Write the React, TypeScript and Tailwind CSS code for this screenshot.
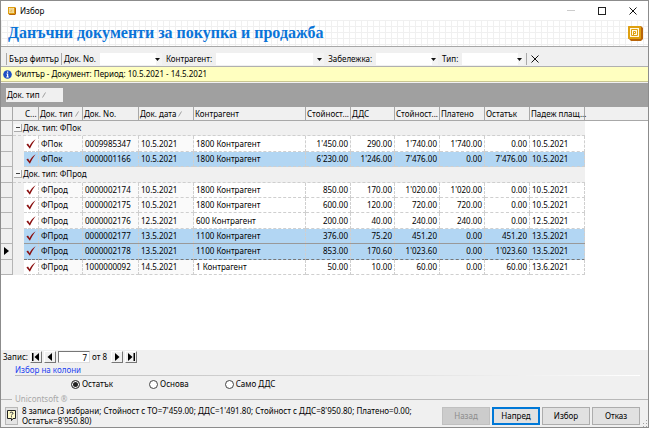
import React from 'react';
import clsx from 'clsx';

type DocRow = {
  type: string;
  no: string;
  date: string;
  partner: string;
  net: string;
  vat: string;
  total: string;
  paid: string;
  rest: string;
  due: string;
  selected?: boolean;
  current?: boolean;
};

type Group = { label: string; rows: DocRow[] };

const groups: Group[] = [
  {
    label: 'Док. тип: ФПок',
    rows: [
      { type: 'ФПок', no: '0009985347', date: '10.5.2021', partner: '1800 Контрагент', net: "1'450.00", vat: '290.00', total: "1'740.00", paid: "1'740.00", rest: '0.00', due: '10.5.2021' },
      { type: 'ФПок', no: '0000001166', date: '10.5.2021', partner: '1800 Контрагент', net: "6'230.00", vat: "1'246.00", total: "7'476.00", paid: '0.00', rest: "7'476.00", due: '10.5.2021', selected: true },
    ],
  },
  {
    label: 'Док. тип: ФПрод',
    rows: [
      { type: 'ФПрод', no: '0000002174', date: '10.5.2021', partner: '1800 Контрагент', net: '850.00', vat: '170.00', total: "1'020.00", paid: "1'020.00", rest: '0.00', due: '10.5.2021' },
      { type: 'ФПрод', no: '0000002175', date: '10.5.2021', partner: '1800 Контрагент', net: '600.00', vat: '120.00', total: '720.00', paid: '720.00', rest: '0.00', due: '10.5.2021' },
      { type: 'ФПрод', no: '0000002176', date: '12.5.2021', partner: '600 Контрагент', net: '200.00', vat: '40.00', total: '240.00', paid: '240.00', rest: '0.00', due: '12.5.2021' },
      { type: 'ФПрод', no: '0000002177', date: '13.5.2021', partner: '1100 Контрагент', net: '376.00', vat: '75.20', total: '451.20', paid: '0.00', rest: '451.20', due: '13.5.2021', selected: true },
      { type: 'ФПрод', no: '0000002178', date: '13.5.2021', partner: '1100 Контрагент', net: '853.00', vat: '170.60', total: "1'023.60", paid: '0.00', rest: "1'023.60", due: '13.5.2021', selected: true, current: true },
      { type: 'ФПрод', no: '1000000092', date: '14.5.2021', partner: '1 Контрагент', net: '50.00', vat: '10.00', total: '60.00', paid: '0.00', rest: '60.00', due: '13.6.2021' },
    ],
  },
];

const columns = [
  { title: 'С...', sorted: false },
  { title: 'Док. тип', sorted: true },
  { title: 'Док. No.', sorted: false },
  { title: 'Док. дата', sorted: true },
  { title: 'Контрагент', sorted: false },
  { title: 'Стойност...', sorted: false },
  { title: 'ДДС', sorted: false },
  { title: 'Стойност...', sorted: false },
  { title: 'Платено', sorted: false },
  { title: 'Остатък', sorted: false },
  { title: 'Падеж плащ...', sorted: false },
];

const Logo = ({ className }: { className: string }) => (
  <svg viewBox="0 0 15 15" className={className} aria-hidden="true">
    <path d="M1 0h12l2 2v11l-2 2H3l-3-3V1z" fill="#b9650a" />
    <rect x="0" y="0" width="13" height="13" rx="1" fill="#dfa010" />
    <path d="M2 2h9v9H2z" fill="#fffbe8" />
    <path d="M3.5 3.5h6v6h-6z" fill="#fffbe8" stroke="#dfa010" />
    <path d="M5.5 9.5v-4h2v2h-2" fill="none" stroke="#dfa010" />
  </svg>
);

const SortMark = () => (
  <svg viewBox="0 0 4 6" className="h-[6px] w-[4px] shrink-0" aria-hidden="true">
    <path d="M0.5 5.5L3.5 0.5" stroke="#8a8a8a" strokeWidth="0.8" />
  </svg>
);

const Check = () => (
  <svg viewBox="0 0 10 10" className="mx-auto h-[10px] w-[10px]" aria-hidden="true">
    <path d="M0.4 5.6L2 4.6L3.6 7C5 4.2 6.6 2 9.6 0.2C7.4 3 5.6 6 3.9 9.8Z" fill="#8b1010" />
  </svg>
);

const FilterSelect = ({ id, label, width }: { id: string; label: string; width: string }) => (
  <div className="flex items-center">
    <label htmlFor={id}>{label}</label>
    <div className={clsx('relative ml-1 h-3', width)}>
      <select id={id} className="h-full w-full appearance-none bg-linear-to-r from-white from-90% to-[#f4f4f4] to-90%">
        <option value=""></option>
      </select>
      <svg viewBox="0 0 5 3" className="pointer-events-none absolute top-[5px] right-[2px] h-[3px] w-[5px]" aria-hidden="true">
        <path d="M0 0h5L2.5 3z" fill="#111" />
      </svg>
    </div>
  </div>
);

const NavButton = ({ label, d }: { label: string; d: string }) => (
  <button type="button" aria-label={label} className="flex h-3 w-3 items-center justify-center border border-r-[#777] border-b-[#777] border-t-white border-l-white">
    <svg viewBox="0 0 10 10" className="h-[10px] w-[10px]" aria-hidden="true">
      <path d={d} fill="#000" />
    </svg>
  </button>
);

const Radio = ({ label, checked }: { label: string; checked?: boolean }) => (
  <label className="flex items-center gap-[2px]">
    <input
      type="radio"
      name="column"
      defaultChecked={checked}
      className="h-[9px] w-[9px] appearance-none rounded-full border border-[#444] bg-white checked:bg-[#222] checked:shadow-[inset_0_0_0_1px_white]"
    />
    {label}
  </label>
);

const cell = 'h-[15px] border-r border-b border-dashed border-[#cfcfcf] px-[2px] py-0 overflow-hidden whitespace-nowrap';

const DocumentRow = ({ row }: { row: DocRow }) => (
  <tr>
    <td className="border-r border-b border-[#b4b4b4] bg-[#f0f0f0] p-0">
      {row.current && (
        <svg viewBox="0 0 5 8" className="mx-auto h-2 w-[5px]" aria-hidden="true">
          <path d="M0 0L5 4L0 8z" fill="#000" />
        </svg>
      )}
    </td>
    <td className="bg-[#f0f0f0] p-0"></td>
    {[row.type, row.no, row.date, row.partner, row.net, row.vat, row.total, row.paid, row.rest, row.due].map((value, i) => (
      <React.Fragment key={i}>
        {i === 0 && (
          <td className={clsx(cell, row.selected && 'bg-[#b2d6f3]', row.current && 'border-b-[#777] shadow-[0_-1px_0_#999]')}>
            <Check />
          </td>
        )}
        <td
          className={clsx(
            cell,
            row.selected ? 'bg-[#b2d6f3]' : i < 3 && 'bg-[#fafafa]',
            row.current && 'border-b-[#777] shadow-[0_-1px_0_#999]',
            i > 3 && i < 9 && 'text-right'
          )}
        >
          {value}
        </td>
      </React.Fragment>
    ))}
    <td></td>
  </tr>
);

const DocumentTable = () => (
  <table className="h-[168px] w-full table-fixed border-separate border-spacing-0">
    <colgroup>
      <col className="w-[12px]" />
      <col className="w-[11px]" />
      <col className="w-[15px]" />
      <col className="w-[44px]" />
      <col className="w-[56px]" />
      <col className="w-[55px]" />
      <col className="w-[112px]" />
      <col className="w-[45px]" />
      <col className="w-[44px]" />
      <col className="w-[45px]" />
      <col className="w-[45px]" />
      <col className="w-[45px]" />
      <col className="w-[55px]" />
      <col />
    </colgroup>
    <thead className="bg-[#f0f0f0]">
      <tr>
        <th className="border-r border-b border-[#a8a8a8] p-0"></th>
        <th className="border-b border-[#a8a8a8] p-0"></th>
        {columns.map((column, i) => (
          <th key={i} className="h-[14px] border-r border-b border-[#a8a8a8] py-0 pl-px text-left font-normal whitespace-nowrap">
            <span className="flex items-center gap-[2px]">
              {column.title}
              {column.sorted && <SortMark />}
            </span>
          </th>
        ))}
        <th className="border-b border-[#a8a8a8] p-0"></th>
      </tr>
    </thead>
    {groups.map((group) => (
      <tbody key={group.label}>
        <tr>
          <td className="border-r border-b border-[#b4b4b4] bg-[#f0f0f0] p-0"></td>
          <td colSpan={12} className="h-[15px] border-b border-dashed border-[#cfcfcf] bg-[#f0f0f0] p-0">
            <div className="flex items-center gap-px pl-px">
              <button type="button" aria-label="Свий групата" className="flex h-2 w-2 items-center justify-center border-r border-b border-[#aaa] bg-[#f8f8f8]">
                <span className="h-px w-1 bg-[#444]"></span>
              </button>
              {group.label}
            </div>
          </td>
          <td></td>
        </tr>
        {group.rows.map((row) => (
          <DocumentRow key={row.no} row={row} />
        ))}
      </tbody>
    ))}
  </table>
);

const App: React.FC = () => (
  <div className="relative flex min-h-screen flex-col border border-[#8c8c8c] bg-[#f0f0f0] font-['Noto_Sans',sans-serif] text-[8px] leading-[10px] text-black">
    <div className="flex h-[19px] items-center bg-white pl-[7px]">
      <Logo className="h-2 w-2" />
      <span className="ml-1 flex-1">Избор</span>
      <div className="flex gap-[23px] pr-[11px]">
        <button type="button" aria-label="Минимизиране" className="flex h-2 w-2 items-center">
          <span className="h-px w-full bg-[#ccc]"></span>
        </button>
        <button type="button" aria-label="Максимизиране" className="h-2 w-2 border border-[#222]"></button>
        <button type="button" aria-label="Затваряне" className="h-2 w-2">
          <svg viewBox="0 0 8 8" className="h-2 w-2" aria-hidden="true">
            <path d="M0.5 0.5L7.5 7.5M7.5 0.5L0.5 7.5" stroke="#111" />
          </svg>
        </button>
      </div>
    </div>

    <header className="flex h-[27px] items-center justify-between border-b border-[#a8a8a8] bg-white bg-[linear-gradient(#f0f0f0_1px,transparent_1px),linear-gradient(90deg,#f0f0f0_1px,transparent_1px)] bg-[size:6px_6px] pr-[5px] pl-[7px]">
      <h1 className="font-['Liberation_Serif',serif] text-[16px] leading-[20px] font-bold text-[#0a74d8]">
        Данъчни документи за покупка и продажба
      </h1>
      <Logo className="h-[15px] w-[15px]" />
    </header>

    <div className="mt-1 flex h-4 items-center border-b border-[#b0b0b0] pl-[3px]">
      <span className="mr-[2px] h-3 w-[3px] border-r border-[#aaa]"></span>
      <button type="button">Бърз филтър</button>
      <span className="mx-[2px] h-3 w-px bg-[#aaa]"></span>
      <div className="flex gap-1">
        <FilterSelect id="doc-no" label="Док. No." width="w-[62px]" />
        <FilterSelect id="partner" label="Контрагент:" width="w-[108px]" />
        <FilterSelect id="note" label="Забележка:" width="w-[62px]" />
        <FilterSelect id="type" label="Тип:" width="w-[62px]" />
      </div>
      <span className="mr-1 ml-[2px] h-3 w-px bg-[#aaa]"></span>
      <button type="button" aria-label="Изчисти филтъра">
        <svg viewBox="0 0 8 8" className="h-2 w-2" aria-hidden="true">
          <path d="M0.5 0.5L7.5 7.5M7.5 0.5L0.5 7.5" stroke="#111" />
        </svg>
      </button>
    </div>

    <div className="flex h-[15px] items-center gap-[3px] border-b border-[#c9c690] bg-[#ffffc0] pl-[2px]">
      <svg viewBox="0 0 9 9" className="h-[9px] w-[9px]" aria-hidden="true">
        <circle cx="4.5" cy="4.5" r="4.3" fill="#1f4fc4" />
        <path d="M4 1.5h1.2v1.2H4zM3.5 3.6h1.7v3h.6v.8H3.3v-.8H4V4.4h-.5z" fill="#fff" />
      </svg>
      Филтър - Документ: Период: 10.5.2021 - 14.5.2021
    </div>

    <div className="mt-px flex h-6 items-center bg-[#a0a0a0] pl-[5px]">
      <button type="button" className="flex h-[14px] w-[57px] items-center gap-[2px] bg-[#f0f0f0] px-px">
        Док. тип
        <SortMark />
      </button>
    </div>

    <main className="flex-1 bg-white">
      <DocumentTable />
    </main>

    <div className="mb-px flex h-[14px] items-center pl-[2px]">
      <label htmlFor="record">Запис:</label>
      <div className="ml-[2px] flex gap-[2px]">
        <NavButton label="Първи" d="M1 1h1.5v8H1zM8 1v8L3.5 5z" />
        <NavButton label="Предишен" d="M7 1v8L2.5 5z" />
      </div>
      <input id="record" defaultValue="7" className="mx-[2px] h-3 w-[32px] border border-t-[#777] border-r-[#ddd] border-b-[#ddd] border-l-[#777] bg-white px-[2px] text-right" />
      <span>от 8</span>
      <div className="ml-1 flex gap-[2px]">
        <NavButton label="Следващ" d="M3 1v8L7.5 5z" />
        <NavButton label="Последен" d="M7.5 1H9v8H7.5zM2 1v8L6.5 5z" />
      </div>
    </div>

    <fieldset className="mb-[2px] pl-[14px]">
      <legend className="float-left w-full text-[#1c3ff0]">Избор на колони</legend>
      <div className="clear-both mr-2 h-px bg-linear-to-r from-[#bbb] via-[#d8d8d8] to-white"></div>
      <div className="flex h-4 items-center gap-9 pl-[56px]">
        <Radio label="Остатък" checked />
        <Radio label="Основа" />
        <Radio label="Само ДДС" />
      </div>
    </fieldset>

    <div className="flex items-center gap-[3px] text-[#a8a8a8]">
      <span className="h-px w-[11px] bg-[#b8b8b8]"></span>
      Unicontsoft ®
      <span className="h-px flex-1 bg-[#b8b8b8]"></span>
    </div>

    <footer className="flex h-[23px] items-center pr-2 pl-1">
      <button type="button" aria-label="Помощ" className="flex h-[18px] w-[13px] items-center justify-center border border-[#b8b8b8] bg-[#e4e4e4]">
        <svg viewBox="0 0 9 11" className="h-[11px] w-[9px]" aria-hidden="true">
          <path d="M0.5 0.5h8v8H6L4.5 10.5V8.5h-4z" fill="#fffbc8" stroke="#222" />
          <path d="M3 3.2C3 1.8 6 1.8 6 3.3C6 4.3 4.5 4.2 4.5 5.4M4.5 6.3v1" fill="none" stroke="#223" />
        </svg>
      </button>
      <p className="ml-1 flex-1">
        8 записа (3 избрани; Стойност с ТО=7'459.00; ДДС=1'491.80; Стойност с ДДС=8'950.80; Платено=0.00; Остатък=8'950.80)
      </p>
      <div className="flex gap-[2px]">
        <button type="button" disabled className="h-[18px] w-12 border border-[#c0c0c0] bg-[#cccccc] text-[#8c8c8c]">Назад</button>
        <button type="button" className="h-[18px] w-12 border-2 border-[#0078d7] bg-[#e1e1e1]">Напред</button>
        <button type="button" className="h-[18px] w-12 border border-[#adadad] bg-[#e1e1e1]">Избор</button>
        <button type="button" className="h-[18px] w-12 border border-[#adadad] bg-[#e1e1e1]">Отказ</button>
      </div>
    </footer>

    <svg viewBox="0 0 7 7" className="absolute right-0 bottom-0 h-[7px] w-[7px]" aria-hidden="true">
      <path d="M5 0h1v1H5zM5 3h1v1H5zM5 6h1v1H5zM2 3h1v1H2zM2 6h1v1H2z" fill="#a0a0a0" />
    </svg>
  </div>
);

export default App;
